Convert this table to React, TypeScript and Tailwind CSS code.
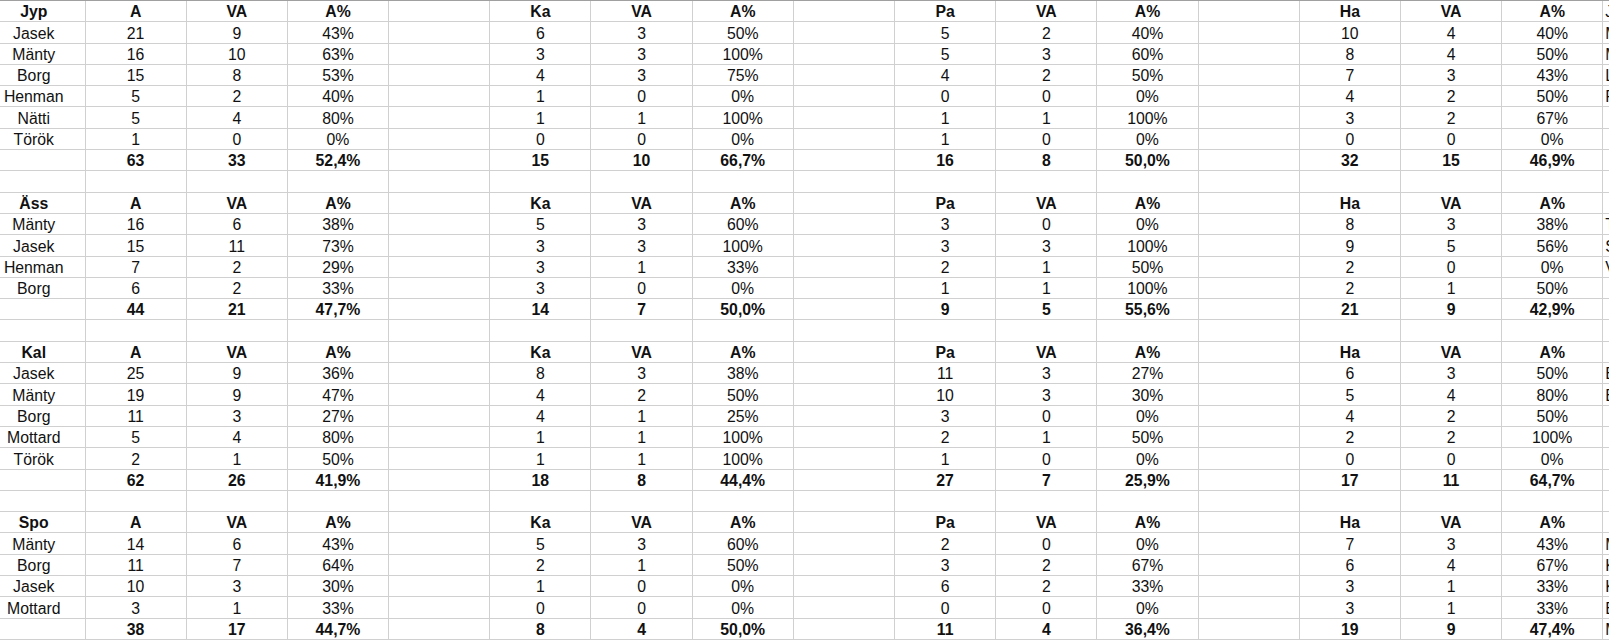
import React from 'react';

type Block = {
  team: string;
  rows: string[];
  total: string;
  extra: Record<number, string>;
};

// one block per opponent: name | A VA A% | Ka VA A% | Pa VA A% | Ha VA A%
const blocks: Block[] = [
  {
    team: 'Jyp',
    rows: [
      'Jasek|21|9|43%|6|3|50%|5|2|40%|10|4|40%',
      'Mänty|16|10|63%|3|3|100%|5|3|60%|8|4|50%',
      'Borg|15|8|53%|4|3|75%|4|2|50%|7|3|43%',
      'Henman|5|2|40%|1|0|0%|0|0|0%|4|2|50%',
      'Nätti|5|4|80%|1|1|100%|1|1|100%|3|2|67%',
      'Török|1|0|0%|0|0|0%|1|0|0%|0|0|0%',
    ],
    total: '|63|33|52,4%|15|10|66,7%|16|8|50,0%|32|15|46,9%',
    extra: { 0: 'Jyp', 1: 'Mänty', 2: 'Mäkelä', 3: 'Lehtonen', 4: 'Forsberg' },
  },
  {
    team: 'Äss',
    rows: [
      'Mänty|16|6|38%|5|3|60%|3|0|0%|8|3|38%',
      'Jasek|15|11|73%|3|3|100%|3|3|100%|9|5|56%',
      'Henman|7|2|29%|3|1|33%|2|1|50%|2|0|0%',
      'Borg|6|2|33%|3|0|0%|1|1|100%|2|1|50%',
    ],
    total: '|44|21|47,7%|14|7|50,0%|9|5|55,6%|21|9|42,9%',
    extra: { 1: 'Tuominen', 2: 'Salmela', 3: 'Virta' },
  },
  {
    team: 'Kal',
    rows: [
      'Jasek|25|9|36%|8|3|38%|11|3|27%|6|3|50%',
      'Mänty|19|9|47%|4|2|50%|10|3|30%|5|4|80%',
      'Borg|11|3|27%|4|1|25%|3|0|0%|4|2|50%',
      'Mottard|5|4|80%|1|1|100%|2|1|50%|2|2|100%',
      'Török|2|1|50%|1|1|100%|1|0|0%|0|0|0%',
    ],
    total: '|62|26|41,9%|18|8|44,4%|27|7|25,9%|17|11|64,7%',
    extra: { 1: 'Eklund', 2: 'Eriksson' },
  },
  {
    team: 'Spo',
    rows: [
      'Mänty|14|6|43%|5|3|60%|2|0|0%|7|3|43%',
      'Borg|11|7|64%|2|1|50%|3|2|67%|6|4|67%',
      'Jasek|10|3|30%|1|0|0%|6|2|33%|3|1|33%',
      'Mottard|3|1|33%|0|0|0%|0|0|0%|3|1|33%',
    ],
    total: '|38|17|44,7%|8|4|50,0%|11|4|36,4%|19|9|47,4%',
    extra: { 1: 'Mäkinen', 2: 'Koskinen', 3: 'Kallio', 4: 'Ekman', 5: 'Mattila' },
  },
];

type Row = { cells: string[]; bold: boolean };

// spread the 13 values over 17 columns, leaving the spacer columns empty
const toCells = (vals: string[], extra = ''): string[] => [
  vals[0], vals[1], vals[2], vals[3], '',
  vals[4], vals[5], vals[6], '',
  vals[7], vals[8], vals[9], '',
  vals[10], vals[11], vals[12], extra,
];

const buildRows = (): Row[] => {
  const out: Row[] = [];
  blocks.forEach((b, bi) => {
    if (bi > 0) out.push({ cells: Array(17).fill(''), bold: false });
    const header = [b.team, 'A', 'VA', 'A%', 'Ka', 'VA', 'A%', 'Pa', 'VA', 'A%', 'Ha', 'VA', 'A%'];
    out.push({ cells: toCells(header, b.extra[0] ?? ''), bold: true });
    b.rows.forEach((r, i) => out.push({ cells: toCells(r.split('|'), b.extra[i + 1] ?? ''), bold: false }));
    out.push({ cells: toCells(b.total.split('|'), b.extra[b.rows.length + 1] ?? ''), bold: true });
  });
  return out;
};

const Cell = ({ text, col, bold }: { text: string; col: number; bold: boolean }) => {
  const base = 'flex items-end h-full border-r border-b border-[#d0d0d0] leading-[18px] whitespace-nowrap overflow-hidden';
  if (col === 0) {
    return <div className={`${base} justify-center pr-[17px] ${bold ? 'font-bold' : ''}`}>{text}</div>;
  }
  if (col === 16) {
    return <div className={`${base} justify-start pl-[2px] border-r-0`}>{text}</div>;
  }
  return <div className={`${base} justify-center ${bold ? 'font-bold' : ''}`}>{text}</div>;
};

export default function App() {
  const rows = buildRows();
  return (
    <div className="w-[1609px] h-[642px] overflow-hidden bg-white text-[#111] font-['Liberation_Sans',Arial,sans-serif] text-[15.8px]">
      <div className="grid grid-cols-[85.5px_repeat(15,101.2px)_1fr] auto-rows-[21.3px] border-t border-[#a0a0a0]">
        {rows.map((r, ri) =>
          r.cells.map((c, ci) => <Cell key={`${ri}-${ci}`} text={c} col={ci} bold={r.bold} />)
        )}
      </div>
    </div>
  );
}
